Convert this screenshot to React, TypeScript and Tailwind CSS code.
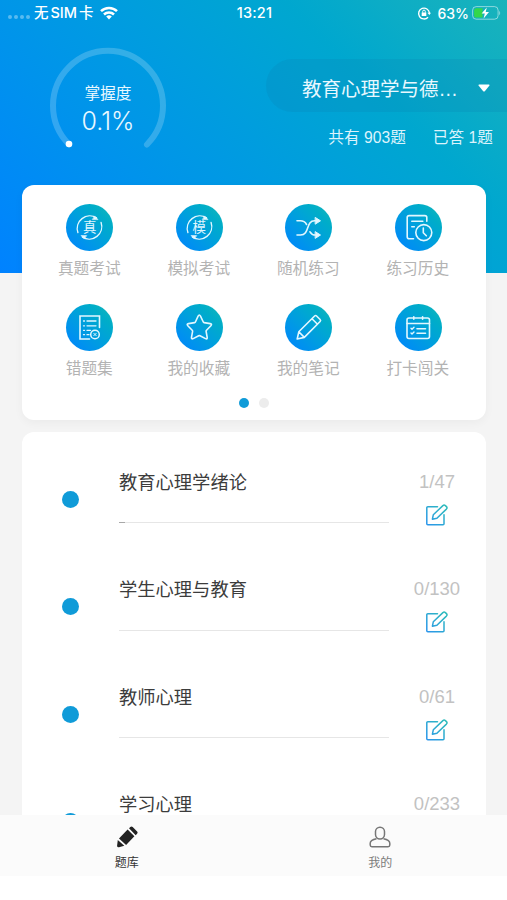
import type { ReactNode } from "react";

type Action = { label: string; icon: ReactNode };

const actions: Action[] = [
  { label: "真题考试", icon: <CycleIcon text="真" /> },
  { label: "模拟考试", icon: <CycleIcon text="模" /> },
  { label: "随机练习", icon: <ShuffleIcon /> },
  { label: "练习历史", icon: <HistoryIcon /> },
  { label: "错题集", icon: <WrongIcon /> },
  { label: "我的收藏", icon: <StarIcon /> },
  { label: "我的笔记", icon: <PencilIcon /> },
  { label: "打卡闯关", icon: <CalendarIcon /> },
];

const chapters = [
  { title: "教育心理学绪论", done: 1, total: 47 },
  { title: "学生心理与教育", done: 0, total: 130 },
  { title: "教师心理", done: 0, total: 61 },
  { title: "学习心理", done: 0, total: 233 },
];

function Glyph({ children }: { children: ReactNode }) {
  return (
    <svg
      viewBox="0 0 47 47"
      fill="none"
      stroke="#e2f7ff"
      strokeWidth="1.6"
      strokeLinecap="round"
      strokeLinejoin="round"
      className="size-[47px]"
    >
      {children}
    </svg>
  );
}

function CycleIcon({ text }: { text: string }) {
  return (
    <div className="grid place-items-center">
      <div className="col-start-1 row-start-1">
        <Glyph>
          <path d="M11.9 28.5A12.6 12.6 0 0 1 30.5 13.8M35.1 18.5A12.6 12.6 0 0 1 16.5 33.2" strokeWidth="1.4" />
          <path d="M28.8 12.2 32 15.6H26.6zM18.2 34.8 15 31.6H20.4z" fill="#e2f7ff" strokeWidth="0.6" />
        </Glyph>
      </div>
      <span className="col-start-1 row-start-1 pt-0.5 text-[13.5px] leading-none text-[#e2f7ff]">{text}</span>
    </div>
  );
}

function ShuffleIcon() {
  return (
    <Glyph>
      <path d="M12 16.8h3.2c3.4 0 5.2 1.5 6.4 3.7M12 31h3.5c9.5 0 5-14.2 14-14.2h1M25 27.8c1 1.9 2.4 3.2 5.5 3.2" />
      <path d="m30.5 13.6 5 3.2-5 3.2zM30.5 27.8l5 3.2-5 3.2z" fill="#e2f7ff" strokeWidth="1" />
    </Glyph>
  );
}

function HistoryIcon() {
  return (
    <Glyph>
      <path d="M18.5 34.8h-4.3a2 2 0 0 1-2-2V13.6a2 2 0 0 1 2-2h15.6a2 2 0 0 1 2 2v3.6M16.8 17.3h11M16.8 22.8h2.5" />
      <circle cx="28.8" cy="28.6" r="8" />
      <path d="M28.3 24v4.8l3 3" />
    </Glyph>
  );
}

function WrongIcon() {
  return (
    <Glyph>
      <path d="M33.5 23.5V12H14v23h9.5" strokeLinejoin="miter" />
      <path d="M17.5 17h1M21 17h9M17.5 21.8h1M21 21.8h9M17.5 26.3h1M21 26.3h3.5M17.5 30.7h1M21 30.7h2" strokeWidth="1.3" />
      <circle cx="29" cy="30.5" r="4.3" strokeWidth="1.5" />
      <path d="m27.8 29.3 2.4 2.4m0-2.4-2.4 2.4" strokeWidth="1" />
    </Glyph>
  );
}

function StarIcon() {
  return (
    <Glyph>
      <path d="M22.1 12.1q1.2-2.2 2.4 0l2.8 5.9q.2.5.8.6l6.1 1q2.2.5.7 2.1l-4.4 4.5q-.5.5-.4 1.1l1.1 6.2q.2 2-1.7 1.1l-5.5-2.8q-.7-.3-1.3 0l-5.5 2.8q-2 .8-1.7-1.2l1.1-6.1q.1-.6-.4-1.1l-4.4-4.5q-1.5-1.6.7-2.1l6.1-1q.6-.1.8-.6z" />
    </Glyph>
  );
}

function PencilIcon() {
  return (
    <Glyph>
      <path d="m12.2 35 1.6-7.2L29.6 12q1-1 2 0l3.5 3.5q1 1 0 2L19.3 33.4zM13.8 27.8l5.5 5.6M27 14.8l5.5 5.5" />
    </Glyph>
  );
}

function CalendarIcon() {
  return (
    <Glyph>
      <rect x="12" y="14" width="22.5" height="20.5" rx="2" />
      <path d="M12 19.5h22.5M18.8 12.7v2.5M27.6 12.7v2.5M22 24.7h8.5M22 29.3h8.5" />
      <path d="m16 24.3 1 1 2-2M16 28.9l1 1 2-2" strokeWidth="1.4" />
    </Glyph>
  );
}

function EditIcon() {
  return (
    <svg viewBox="0 0 22 22" fill="none" stroke="url(#edit)" strokeWidth="1.5" strokeLinejoin="round" strokeLinecap="round" className="size-[22px]">
      <defs>
        <linearGradient id="edit" x1="0" y1="22" x2="22" y2="0" gradientUnits="userSpaceOnUse">
          <stop stopColor="#2a93ee" />
          <stop offset="1" stopColor="#2fc0b6" />
        </linearGradient>
      </defs>
      <path d="M11.5 2.8H1.8a1 1 0 0 0-1 1v15.9a1 1 0 0 0 1 1H17a1 1 0 0 0 1-1v-9" />
      <path d="M6.4 15.2 7.3 10.8 16.9 1.6q1.2-1 2.5 0l1 1q1.2 1.2 0 2.5L10.9 14.3z" />
    </svg>
  );
}

function StatusBar() {
  return (
    <div className="grid h-[26px] grid-cols-3 items-center pr-1.5 pl-2 font-['Inter','Noto_Sans_CJK_SC',sans-serif] text-[14.5px] font-medium">
      <div className="flex items-center">
        <div className="mt-2 flex gap-[2px]">
          <i className="size-1 rounded-full bg-white/35" />
          <i className="size-1 rounded-full bg-white/35" />
          <i className="size-1 rounded-full bg-white/35" />
          <i className="size-1 rounded-full bg-white/35" />
        </div>
        <span className="ml-1 flex gap-[2px] whitespace-nowrap">
          <span>无</span>
          <span>SIM</span>
          <span>卡</span>
        </span>
        <svg viewBox="0 0 18 14" className="ml-1.5 h-[14px] w-[18px]" fill="none" stroke="#fff" strokeWidth="2.5">
          <path d="M1 5.2a11.3 11.3 0 0 1 16 0M4 8.5a7.1 7.1 0 0 1 10 0" />
          <path d="M9 13.4 6.2 10.6a4 4 0 0 1 5.6 0z" fill="#fff" stroke="none" />
        </svg>
      </div>
      <span className="text-center tracking-[0.2px]">13:21</span>
      <div className="flex items-center justify-end">
        <svg viewBox="0 0 14 14" className="mr-1.5 size-[14px]" fill="none" stroke="#fff" strokeWidth="1.4">
          <path d="M11 11.2A5.4 5.4 0 1 1 12.4 7" />
          <path d="m10.4 6.8 2 2.3 1.6-2.3zM4.7 6.5h4.6v3.4H4.7z" fill="#fff" stroke="none" />
          <path d="M5.7 6.7V5.4a1.3 1.3 0 0 1 2.6 0v1.3" strokeWidth="1" />
        </svg>
        <span className="text-[14px]">63%</span>
        <svg viewBox="0 0 29 14" className="ml-[3px] h-[14px] w-[29px]">
          <rect x="0.6" y="0.6" width="25.5" height="12.6" rx="3.6" fill="none" stroke="#fff" strokeOpacity="0.5" />
          <path d="M4.3 2.2h6.2v9.4H4.3a2.2 2.2 0 0 1-2.2-2.2v-5a2.2 2.2 0 0 1 2.2-2.2z" fill="#32d74b" />
          <path d="M27.2 4.7q2 2.3 0 4.6z" fill="#fff" fillOpacity="0.5" />
          <path d="M14.8 1.5 9.6 7.6h3.2l-1.2 4.9 5.4-6.4h-3.3z" fill="#fff" />
        </svg>
      </div>
    </div>
  );
}

function Gauge() {
  return (
    <div className="mt-[21px] ml-[49px] grid size-[118px]">
      <svg viewBox="0 0 118 118" className="col-start-1 row-start-1 size-[118px]">
        <path
          d="M20 97.5A55 55 0 1 1 98 97.5"
          fill="none"
          stroke="#fff"
          strokeOpacity="0.2"
          strokeWidth="6"
          strokeLinecap="round"
        />
        <circle cx="20" cy="97" r="3.3" fill="#fff" />
      </svg>
      <div className="col-start-1 row-start-1 flex flex-col items-center pt-[37px] text-[#e8f8ff]">
        <span className="text-[15.7px] leading-5">掌握度</span>
        <span className="mt-px font-['Inter',sans-serif] text-[25px] leading-8 font-light">0.1%</span>
      </div>
    </div>
  );
}

export default function App() {
  return (
    <div className="flex h-[900px] w-[507px] flex-col overflow-hidden bg-white font-['Liberation_Sans','Noto_Sans_CJK_SC',sans-serif]">
      <main className="h-[815px] shrink-0 overflow-hidden bg-[#f4f4f4]">
        {/* 顶部 */}
        <header className="h-[273px] bg-linear-45 from-[#0082ff] to-[#19b3ba] text-white">
          <StatusBar />
          <div className="flex justify-between">
            <Gauge />
            <div className="mt-[33px] w-[241px]">
              <div className="flex h-[53px] items-center justify-between rounded-l-full bg-[#087fb0]/20 pr-[17px] pl-9">
                <span className="pt-2 text-[19.5px] whitespace-nowrap text-[#e8f8ff]">教育心理学与德…</span>
                <svg viewBox="0 0 12 8" className="mt-1 h-2 w-3">
                  <path d="M1 .5h10q1 .4.3 1.3L7 7q-1 1-2 0L.7 1.8Q0 .9 1 .5z" fill="#fff" />
                </svg>
              </div>
              <div className="mt-[14px] flex justify-end gap-[27px] pr-3.5 text-[15.7px] leading-6 text-[#dcf3fc]">
                <span>共有 903题</span>
                <span>已答 1题</span>
              </div>
            </div>
          </div>
        </header>

        {/* 功能入口 */}
        <section className="relative mx-[22px] -mt-[88px] h-[235px] w-[464px] rounded-xl bg-white pt-[18.5px] shadow-[0_3px_10px_rgba(0,0,0,0.04)]">
          <div className="mx-auto grid w-[438px] grid-cols-4 gap-y-[13px]">
            {actions.map((action) => (
              <div key={action.label} className="flex flex-col items-center">
                <div className="size-[47px] rounded-full bg-linear-45 from-[#0082ff] to-[#19b8b5]">{action.icon}</div>
                <span className="mt-[5.5px] mr-px h-[34.5px] text-[15.7px] leading-[26px] text-[#b3b3b3]">{action.label}</span>
              </div>
            ))}
          </div>
          <div className="mt-[7.5px] flex justify-center gap-[9.5px]">
            <i className="size-2.5 rounded-full bg-[#109bd8]" />
            <i className="size-2.5 rounded-full bg-[#ececec]" />
          </div>
        </section>

        {/* 章节列表 */}
        <section className="mx-[22px] mt-3 w-[464px] rounded-xl bg-white pt-[13.7px]">
          {chapters.map((chapter) => (
            <div key={chapter.title} className="flex h-[107.5px] items-center pl-[39.5px]">
              <i className="size-[17px] shrink-0 rounded-full bg-[#109bd8]" />
              <div className="ml-[40.5px] h-[61px] w-[270px]">
                <h3 className="text-[18.3px] leading-7 text-[#3c3c3c]">{chapter.title}</h3>
                <div className="mt-[25.5px] h-px bg-[#e6e6e6]">
                  <div
                    className="h-full bg-[#a8a8a8]"
                    style={{ width: `${(chapter.done / chapter.total) * 100}%` }}
                  />
                </div>
              </div>
              <div className="flex h-[61px] w-24 flex-col items-center">
                <span className="text-[18.5px] leading-[25px] text-[#c2c2c2]">
                  {chapter.done}/{chapter.total}
                </span>
                <div className="mt-2.5">
                  <EditIcon />
                </div>
              </div>
            </div>
          ))}
        </section>
      </main>

      {/* 底部导航 */}
      <nav className="flex h-[61px] bg-[#fbfbfb] pt-[11px] text-xs">
        <div className="flex flex-1 flex-col items-center text-[#333]">
          <svg viewBox="0 0 22 22" className="size-[22px]" fill="#222">
            <path d="m11.6 3.6 6.8 6.7-8.3 8.6-7.1-6.4zM13 2.3l1.3-1.3q1.2-1 2.4 0l4.4 4.4q1 1.2 0 2.4l-1.4 1.4zM1.8 13.9 8.3 19.7 3 21.2q-2 .3-1.9-1.7z" />
          </svg>
          <span className="mt-[5px] leading-5">题库</span>
        </div>
        <div className="flex flex-1 flex-col items-center text-[#7c7c7c]">
          <svg viewBox="0 0 22 22" className="size-[22px]" fill="none" stroke="#777" strokeWidth="1.5">
            <rect x="6.5" y="1.2" width="9" height="11.8" rx="4.4" />
            <path d="M7.5 12.7C3.5 13.5 1.2 15 1.2 17.3v1.8q0 1.7 1.7 1.7h16.2q1.7 0 1.7-1.7v-1.8c0-2.3-2.3-3.8-6.3-4.6" />
          </svg>
          <span className="mt-[5px] leading-5">我的</span>
        </div>
      </nav>
    </div>
  );
}
